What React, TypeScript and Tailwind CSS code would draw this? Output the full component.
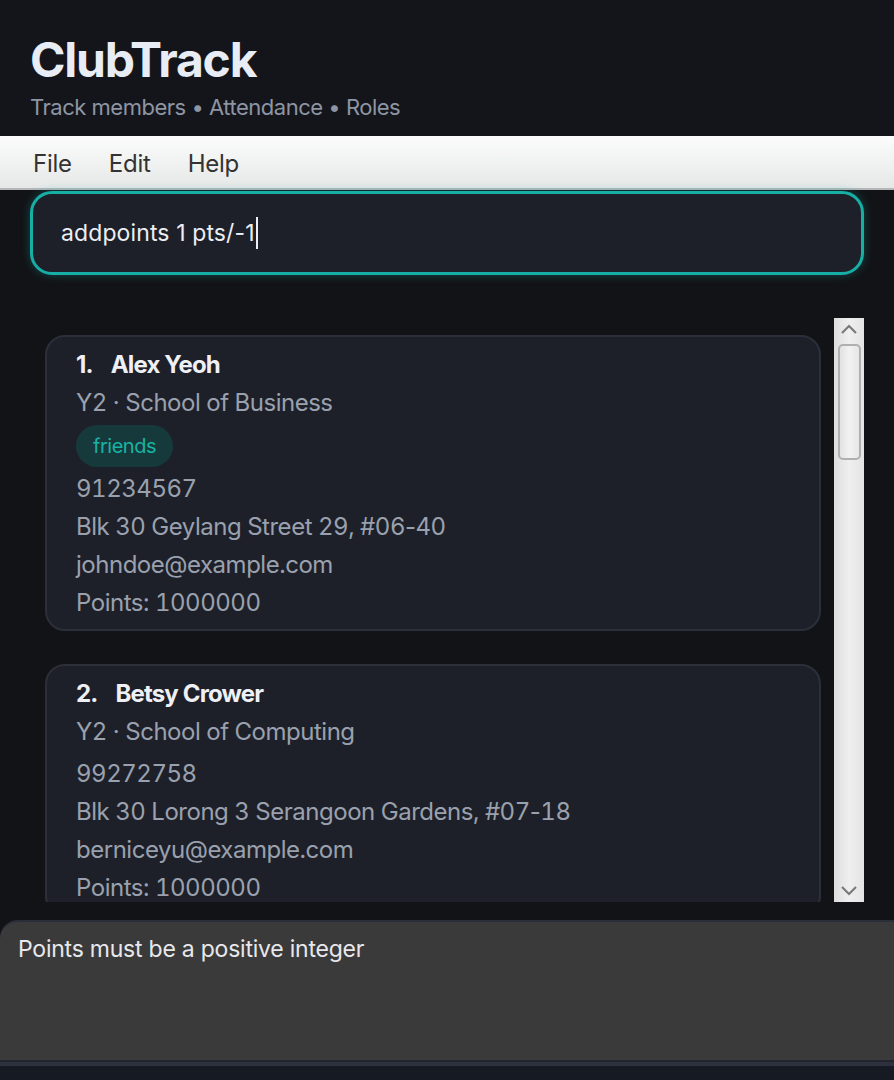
import React from 'react';

type Member = {
  name: string;
  school: string;
  tags: string[];
  phone: string;
  address: string;
  email: string;
  points: number;
};

const members: Member[] = [
  {
    name: 'Alex Yeoh',
    school: 'Y2 · School of Business',
    tags: ['friends'],
    phone: '91234567',
    address: 'Blk 30 Geylang Street 29, #06-40',
    email: 'johndoe@example.com',
    points: 1000000
  },
  {
    name: 'Betsy Crower',
    school: 'Y2 · School of Computing',
    tags: [],
    phone: '99272758',
    address: 'Blk 30 Lorong 3 Serangoon Gardens, #07-18',
    email: 'berniceyu@example.com',
    points: 1000000
  }
];

// tabular digits, but keep the hyphen at its normal width
function Address({ text }: { text: string }) {
  const parts = text.split('-');
  return (
    <span>
      {parts.map((p, i) => (
        <React.Fragment key={i}>
          {i > 0 ? <span className="normal-nums">-</span> : null}
          {p}
        </React.Fragment>
      ))}
    </span>
  );
}

function MemberCard({ index, member }: { index: number; member: Member }) {
  return (
    <div className="shrink-0 rounded-[20px] border-2 border-[#2b2f39] bg-[#1e2029] pl-[29px] pt-[12px] pb-[7px]">
      <div className="flex h-[31px] items-center gap-[18px] text-[24px] font-bold tracking-[-0.035em] text-[#eef0f5]">
        <span>{index}.</span>
        <span>{member.name}</span>
      </div>
      <div className="mt-[4px] flex flex-col text-[24px] leading-[38px] tracking-[-0.02em] tabular-nums text-[#9aa1ae]">
        <span className={member.tags.length > 0 ? '' : 'mb-[4px]'}>{member.school}</span>
        {member.tags.length > 0 ? (
          <div className="flex gap-2 py-[3px]">
            {member.tags.map((tag) => (
              <span
                key={tag}
                className="flex h-[42px] items-center rounded-full bg-[#163a3c] px-[17px] text-[20px] text-[#18b3a3]"
              >
                {tag}
              </span>
            ))}
          </div>
        ) : null}
        <span>{member.phone}</span>
        <Address text={member.address} />
        <span>{member.email}</span>
        <span>Points: {member.points}</span>
      </div>
    </div>
  );
}

function ScrollBar() {
  return (
    <div className="flex w-[30px] shrink-0 flex-col items-center bg-gradient-to-r from-[#dedede] via-[#efefef] to-[#e4e4e4]">
      <svg width="22" height="25" viewBox="0 0 22 25" className="shrink-0">
        <path d="M4 15 L11 8 L18 15" fill="none" stroke="#7a7a7a" strokeWidth="2.2" />
      </svg>
      <div className="mt-[1px] h-[116px] w-[23px] rounded-[5px] border-2 border-[#b0b0b0] bg-gradient-to-r from-[#e2e2e2] via-[#f2f2f2] to-[#e6e6e6]" />
      <div className="flex-1" />
      <svg width="22" height="24" viewBox="0 0 22 24" className="shrink-0">
        <path d="M4 9 L11 16 L18 9" fill="none" stroke="#7a7a7a" strokeWidth="2.2" />
      </svg>
    </div>
  );
}

export default function App() {
  return (
    <div
      className="flex h-[1080px] w-[894px] flex-col overflow-hidden bg-[#121317]"
      style={{ fontFamily: 'Inter, "Noto Sans", sans-serif' }}
    >
      <header className="flex h-[136px] shrink-0 flex-col bg-[#14151a] pl-[30px] pt-[30px]">
        <h1 className="text-[48px] font-bold leading-[60px] tracking-[-0.025em] text-[#e8ecf4]">ClubTrack</h1>
        <p className="mt-[2px] text-[22px] leading-[30px] tracking-[-0.022em] text-[#8d95a4]">
          Track members • Attendance • Roles
        </p>
      </header>

      <nav className="flex h-[54px] shrink-0 items-center gap-[37px] border-b-2 border-[#b4b6b8] bg-gradient-to-b from-[#fcfcfc] to-[#e6e8e8] pl-[33px] pt-[3px] text-[24px] tracking-[-0.01em] text-[#333333]">
        <span>File</span>
        <span>Edit</span>
        <span>Help</span>
      </nav>

      <div className="shrink-0 px-[30px] pt-[1px]">
        <div className="flex h-[84px] items-center rounded-[22px] border-[3px] border-[#16aea5] bg-[#1e2029] pl-[28px] shadow-[0_0_10px_rgba(22,174,165,0.35)]">
          <span className="text-[23px] tracking-[0.005em] text-[#eceef3]">addpoints 1 pts/-1</span>
          <span className="ml-[1px] h-[32px] w-[2px] bg-[#eceef3]" />
        </div>
      </div>

      <div className="mt-[43px] flex h-[584px] shrink-0">
        <div className="flex flex-1 flex-col gap-[33px] overflow-hidden pl-[45px] pr-[13px] pt-[17px]">
          {members.map((m, i) => (
            <MemberCard key={m.name} index={i + 1} member={m} />
          ))}
        </div>
        <ScrollBar />
        <div className="w-[30px] shrink-0" />
      </div>

      <div className="mt-[18px] h-[140px] shrink-0 rounded-tl-[18px] border-t-2 border-[#2a2e38] bg-[#3a3a3a] pl-[18px] pt-[10px]">
        <p className="text-[23px] leading-[34px] tracking-[-0.01em] text-[#e8e8ec]">Points must be a positive integer</p>
      </div>

      <div className="h-[2px] shrink-0 bg-[#22252d]" />
      <div className="h-[4px] shrink-0 bg-[#2c313d]" />
      <div className="flex-1 bg-[#151a23]" />
    </div>
  );
}
